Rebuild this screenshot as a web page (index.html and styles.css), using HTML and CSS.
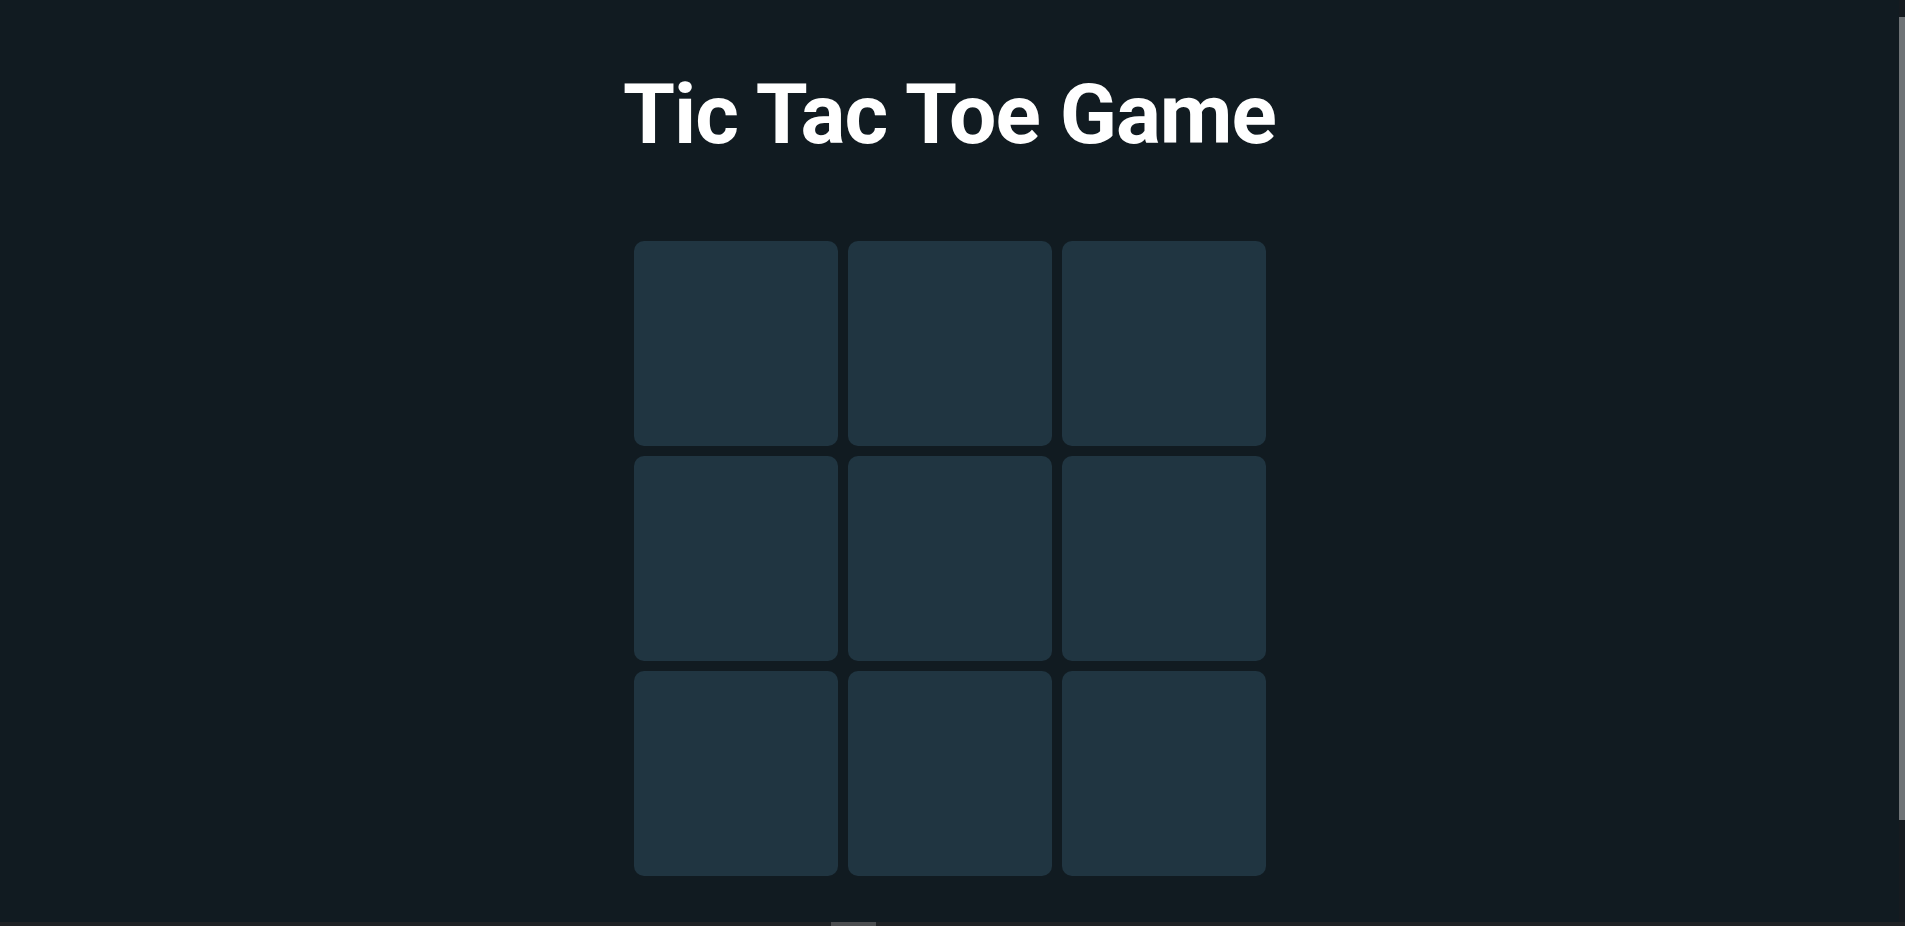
FILE: index.html
```html
<!DOCTYPE html>
<html lang="en">
<head>
<meta charset="utf-8">
<title>Tic Tac Toe Game</title>
<link rel="stylesheet" href="styles.css">
</head>
<body>
<main class="game">
  <h1 class="title">Tic Tac Toe Game</h1>
  <div class="board">
    <button class="cell"></button>
    <button class="cell"></button>
    <button class="cell"></button>
    <button class="cell"></button>
    <button class="cell"></button>
    <button class="cell"></button>
    <button class="cell"></button>
    <button class="cell"></button>
    <button class="cell"></button>
  </div>
</main>
<div class="vscroll" aria-hidden="true"><div class="vthumb"></div></div>
<div class="hscroll" aria-hidden="true"><div class="hthumb"></div></div>
</body>
</html>
```

FILE: styles.css
```css
html {
  background: #111b21;
}
body {
  margin: 0;
  background: #111b21;
  font-family: Roboto, "Liberation Sans", sans-serif;
  color: #ffffff;
  overflow: hidden;
}
.game {
  display: flex;
  flex-direction: column;
  align-items: center;
  padding-top: 66px;
  padding-right: 6px;
}
.title {
  margin: 0;
  font-size: 84px;
  font-weight: 700;
  line-height: 98px;
  letter-spacing: -1px;
}
.board {
  margin-top: 77px;
  display: grid;
  grid-template-columns: repeat(3, 204px);
  grid-template-rows: repeat(3, 205px);
  gap: 10px;
}
.cell {
  border: none;
  border-radius: 10px;
  background: #203541;
  padding: 0;
  cursor: pointer;
}
.vscroll {
  position: fixed;
  top: 0;
  right: 0;
  bottom: 4px;
  width: 6px;
  background: #151b20;
}
.vthumb {
  margin-top: 17px;
  height: 803px;
  background: #6f7376;
}
.hscroll {
  position: fixed;
  left: 0;
  right: 0;
  bottom: 0;
  height: 4px;
  background: #1f2225;
}
.hthumb {
  margin-left: 831px;
  width: 45px;
  height: 4px;
  background: #4d4f51;
}
```
